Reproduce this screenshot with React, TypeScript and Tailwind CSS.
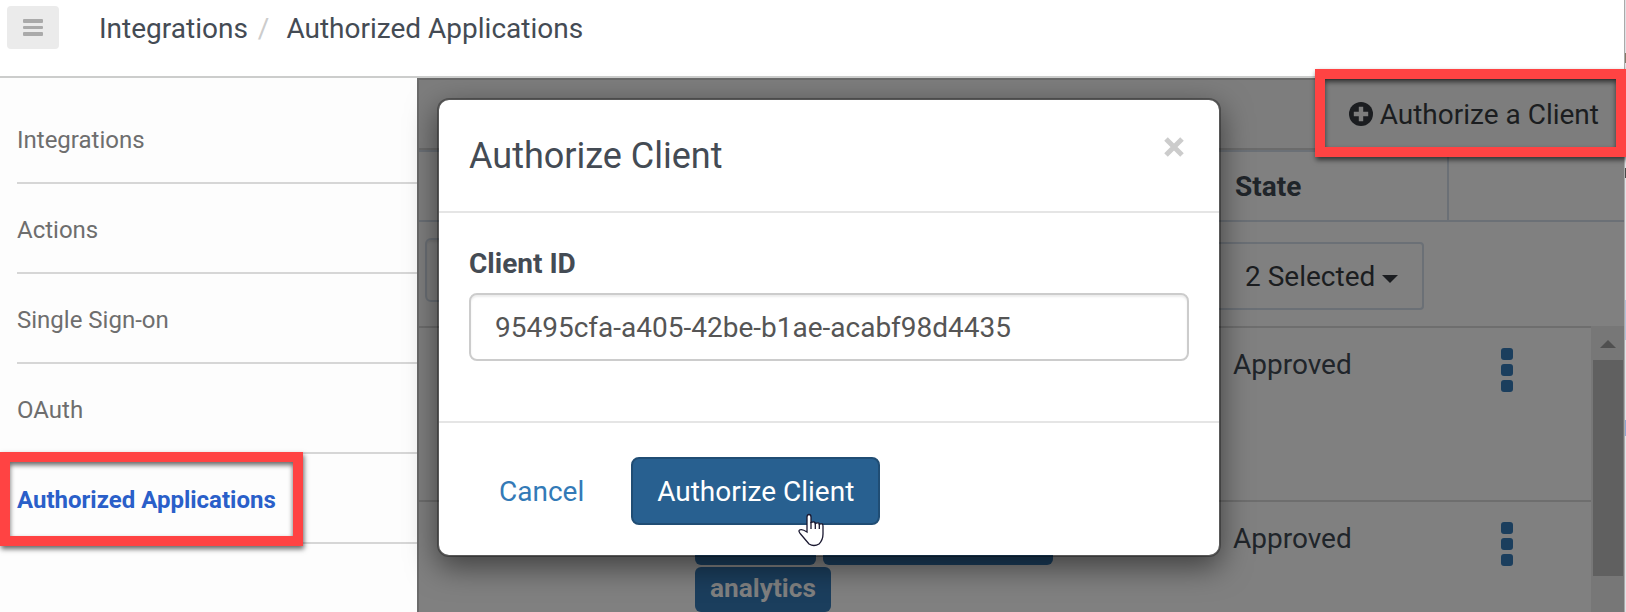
const NAV_ITEMS = ['Integrations', 'Actions', 'Single Sign-on', 'OAuth', 'Authorized Applications']
const ACTIVE_ITEM = 'Authorized Applications'

function Header() {
  return (
    <header className="flex h-[78px] shrink-0 items-start border-b-2 border-[#cccdcc] bg-white pl-[7px] pt-1.5">
      <button
        type="button"
        aria-label="Toggle menu"
        className="flex h-[43px] w-[52px] flex-col items-center gap-[3px] rounded-[4px] bg-[#ebebeb] pt-[13px]"
      >
        {[0, 1, 2].map((i) => (
          <span key={i} className="h-[3.5px] w-5 rounded-[1px] bg-[#aaa]" />
        ))}
      </button>
      <nav className="flex pl-10 pt-[7px] text-[28px] leading-8 text-[#444b54]">
        <span>Integrations</span>
        <span className="pl-2.5 pr-[17px] text-[#ccc]">/</span>
        <span>Authorized Applications</span>
      </nav>
    </header>
  )
}

function Sidebar() {
  return (
    <aside className="w-[417px] shrink-0 bg-[#fdfdfd] pl-[17px] pt-4">
      {NAV_ITEMS.map((item) => (
        <a
          key={item}
          className={`flex h-[90px] items-center border-b-2 border-[#d6d6d6] pt-1 text-[24px] ${
            item === ACTIVE_ITEM ? 'font-bold text-[#2a5fc9]' : 'text-[#6e6e6e]'
          }`}
        >
          {item}
        </a>
      ))}
    </aside>
  )
}

function RowMenu() {
  return (
    <div className="flex flex-col gap-1 pt-5">
      {[0, 1, 2].map((i) => (
        <span key={i} className="size-3 rounded-[3px] bg-[#1b3e5d]" />
      ))}
    </div>
  )
}

function Row({ tags }: { tags: string[] }) {
  return (
    <div className="flex h-[174px] shrink-0 border-t-2 border-[#6e6e6e]">
      <div className="w-[276px] shrink-0" />
      <div className="mr-[138px] flex w-[400px] shrink-0 flex-wrap content-start gap-x-[7px] gap-y-0.5 pt-[18px]">
        {tags.map((tag, i) => (
          <span
            key={i}
            className={`flex h-[45px] items-center rounded-[6px] bg-[#1b3e5d] px-[15px] pb-0.5 text-[26.25px] font-bold text-[#808080] ${
              ['w-[121px]', 'w-[230px]', 'w-[136px]'][i]
            }`}
          >
            {tag}
          </span>
        ))}
      </div>
      <div className="w-[268px] shrink-0 pt-[21px] text-[28px] leading-8 text-[#20252a]">Approved</div>
      <RowMenu />
    </div>
  )
}

function Table() {
  return (
    <main className="flex flex-1 flex-col overflow-hidden border-l-2 border-t-2 border-[#6b6b6b] bg-[#808080]">
      <div className="flex h-[70px] shrink-0 items-center justify-end border-b-2 border-[#6b6b6b] bg-[#7d7d7d] pr-[25px] text-[28px] text-[#1b1d20]">
        <svg width="24" height="24" viewBox="0 0 24 24" className="mr-[7px]">
          <circle cx="12" cy="12" r="12" fill="#1b1d20" />
          <path d="M12 4.800v14.400M4.800 12h14.400" stroke="#7d7d7d" strokeWidth="4.400" />
        </svg>
        <span className="pt-0.5">Authorize a Client</span>
      </div>
      <div className="flex h-[72px] shrink-0 border-y-2 border-[#6b7076] text-[28px] font-bold text-[#20252a]">
        <div className="flex w-[1030px] items-center border-r-2 border-[#6b7076] pl-[816px] pt-0.5">State</div>
      </div>
      <div className="flex h-[104px] shrink-0 pl-1.5 pt-4">
        <div className="h-16 w-[600px] shrink-0 rounded-[6px] border-2 border-[#6b7076] shadow-[inset_0_2px_2px_#777]" />
        <button
          type="button"
          className="ml-[187px] mt-1 flex h-[68px] w-[212px] shrink-0 items-center rounded-[4px] border-2 border-[#6b7076] pl-[31px] pt-0.5 text-[28px] text-[#1b1d20]"
        >
          2 Selected
          <svg width="16" height="8" viewBox="0 0 16 8" className="ml-[7px] mt-1" fill="currentColor">
            <path d="M0 0h16L8 8z" />
          </svg>
        </button>
      </div>
      <div className="flex flex-1 overflow-hidden">
        <div className="flex w-[1172px] flex-col">
          <Row tags={[]} />
          <Row tags={['', '', 'analytics']} />
        </div>
        <div className="flex flex-1 flex-col items-center bg-[#777]">
          <svg width="16" height="8" viewBox="0 0 16 8" className="mb-3 mt-3.5 shrink-0">
            <path d="M8 0l8 8H0z" fill="#505050" />
          </svg>
          <div className="h-[216px] w-[30px] shrink-0 bg-[#606060]" />
        </div>
      </div>
    </main>
  )
}

function AuthorizeDialog() {
  return (
    <div
      role="dialog"
      className="absolute left-[437px] top-[98px] flex h-[459px] w-[784px] flex-col rounded-[12px] border-2 border-black/30 bg-white bg-clip-padding text-[28px] shadow-[0_10px_30px_rgba(0,0,0,0.5)]"
    >
      <div className="flex h-[113px] shrink-0 justify-between border-b-2 border-[#e5e5e5] pl-[30px] pr-[35px] pt-[35px]">
        <h4 className="text-[36px] leading-[42px] text-[#444b54]">Authorize Client</h4>
        <button type="button" aria-label="Close" className="h-[22px] pt-0.5">
          <svg width="20" height="20" viewBox="0 0 20 20" stroke="#ccc" strokeWidth="5">
            <path d="M2 2l16 16M18 2L2 18" />
          </svg>
        </button>
      </div>
      <div className="flex h-[208px] shrink-0 flex-col px-[30px] pt-[35px]">
        <label className="leading-8 font-bold text-[#444b54]">Client ID</label>
        <input
          readOnly
          value="95495cfa-a405-42be-b1ae-acabf98d4435"
          className="mt-[13px] h-[68px] rounded-[8px] border-2 border-[#ccc] px-6 text-[#555] shadow-[inset_0_2px_2px_rgba(0,0,0,0.075)] outline-none"
        />
      </div>
      <div className="flex flex-1 items-start border-t-2 border-[#e5e5e5] pl-[60px] pt-[34px]">
        <button type="button" className="h-[68px] pt-0.5 text-[#337ab7]">
          Cancel
        </button>
        <button
          type="button"
          className="ml-[47px] h-[68px] w-[249px] rounded-[8px] border-2 border-[#204d74] bg-[#286090] pt-0.5 text-white"
        >
          Authorize Client
        </button>
      </div>
    </div>
  )
}

function HandCursor() {
  return (
    <svg className="absolute left-[798px] top-[513px]" width="27" height="34" viewBox="0 0 27 34">
      <path
        d="M9 19V4Q9 1.500 11 1.500T13 4V9.500Q17 8 17.300 10.500Q21 8.800 21.300 11.200Q25 9.800 25 13V21Q25 27 21 31Q16 34 11 31L3 21.500Q0 18 1.500 17Q4 15.500 9 19Z"
        fill="#fff"
        stroke="#1a1830"
        strokeWidth="1.300"
      />
      <path d="M13 9v7M17.300 10v6M21.300 11v5" stroke="#1a1830" strokeWidth="1.300" />
    </svg>
  )
}

// sliver of the window behind, visible past the right edge
function WindowEdge() {
  return (
    <div className="flex w-0.5 shrink-0 flex-col border-l border-[#aaa] bg-[#e0e2e6]">
      <span className="mt-[53px] h-2.5 bg-[#857a68]" />
      <span className="mt-[105px] h-2.5 bg-[#4a4a4a]" />
      <span className="mt-[122px] h-10 bg-[#b4c0d8]" />
      <span className="mt-20 h-4 bg-[#8fa5d0]" />
    </div>
  )
}

export default function App() {
  return (
    <div className="relative flex h-[612px] w-[1626px] overflow-hidden bg-white font-['Roboto',sans-serif]">
      <div className="flex flex-1 flex-col">
        <Header />
        <div className="flex flex-1 overflow-hidden">
          <Sidebar />
          <Table />
        </div>
      </div>
      <WindowEdge />
      <AuthorizeDialog />
      <HandCursor />
      <div className="absolute left-0 top-[452px] h-[94px] w-[303px] border-[10px] border-[#ff4343] shadow-[1px_3px_5px_rgba(0,0,0,0.6),inset_0_3px_5px_rgba(0,0,0,0.6)]" />
      <div className="absolute left-[1315px] top-[69px] h-[88px] w-[311px] border-[10px] border-[#ff4343] shadow-[1px_3px_5px_rgba(0,0,0,0.6),inset_0_3px_5px_rgba(0,0,0,0.6)]" />
    </div>
  )
}
